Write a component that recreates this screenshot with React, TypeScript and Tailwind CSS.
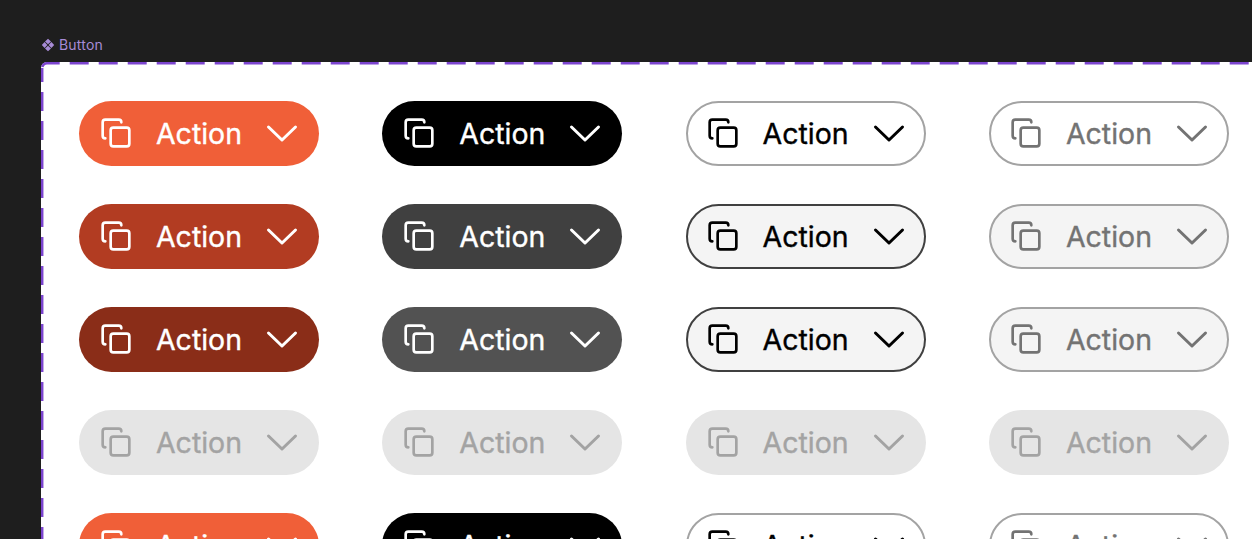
import React from "react"
import { Copy } from "lucide-react"

type Variant = { box: string; ink: string }

const rows: Variant[][] = [
  [
    { box: "bg-[#f05f38]", ink: "text-white" },
    { box: "bg-black", ink: "text-white" },
    { box: "bg-white border-2 border-[#a3a3a3]", ink: "text-black" },
    { box: "bg-white border-2 border-[#a3a3a3]", ink: "text-[#737373]" },
  ],
  [
    { box: "bg-[#b23c22]", ink: "text-white" },
    { box: "bg-[#404040]", ink: "text-white" },
    { box: "bg-[#f4f4f4] border-2 border-[#404040]", ink: "text-black" },
    { box: "bg-[#f4f4f4] border-2 border-[#a3a3a3]", ink: "text-[#737373]" },
  ],
  [
    { box: "bg-[#8a2d18]", ink: "text-white" },
    { box: "bg-[#525252]", ink: "text-white" },
    { box: "bg-[#f4f4f4] border-2 border-[#404040]", ink: "text-black" },
    { box: "bg-[#f4f4f4] border-2 border-[#a3a3a3]", ink: "text-[#737373]" },
  ],
  [
    { box: "bg-[#e5e5e5]", ink: "text-[#a3a3a3]" },
    { box: "bg-[#e5e5e5]", ink: "text-[#a3a3a3]" },
    { box: "bg-[#e5e5e5]", ink: "text-[#a3a3a3]" },
    { box: "bg-[#e5e5e5]", ink: "text-[#a3a3a3]" },
  ],
  [
    { box: "bg-[#f05f38]", ink: "text-white" },
    { box: "bg-black", ink: "text-white" },
    { box: "bg-white border-2 border-[#a3a3a3]", ink: "text-black" },
    { box: "bg-white border-2 border-[#a3a3a3]", ink: "text-[#737373]" },
  ],
]

function ActionButton({ box, ink }: Variant) {
  return (
    <button className={`flex h-[64.5px] w-[240px] items-center justify-center gap-6 rounded-full ${box} ${ink}`}>
      <Copy size={32} strokeWidth={2} />
      <span className="pt-[2px] text-[28.5px] leading-none [-webkit-text-stroke:0.35px]">Action</span>
      <svg width="32" height="32" viewBox="0 0 32 32" fill="none" stroke="currentColor" strokeWidth="3" strokeLinecap="round" strokeLinejoin="round">
        <path d="M2.5 10 L16 23 L29.5 10" />
      </svg>
    </button>
  )
}

export default function App() {
  return (
    <div className="h-[539px] w-[1252px] overflow-hidden bg-[#1e1e1e] pl-[41px] pt-[38px] [font-family:Inter,sans-serif]">
      <div className="flex h-[14px] items-center gap-[4px] text-[14px] leading-none tracking-[0.2px] text-[#a78bd6]">
        <svg width="14" height="14" viewBox="0 0 14 14" fill="currentColor">
          <path d="M7 .8 10 3.6 7 6.3 4 3.6ZM3.6 4 6.4 7 3.6 10 .8 7ZM10.4 4 13.2 7 10.4 10 7.6 7ZM7 7.7 10 10.4 7 13.2 4 10.4Z" />
        </svg>
        Button
      </div>
      <div className="relative mt-[10px] h-[520px] w-[1300px] rounded-tl-[6px] bg-white pl-[38px] pt-[39px]">
        <svg className="absolute left-0 top-0" width="1300" height="520" fill="none" stroke="#7c45cf" strokeWidth="2.5" strokeDasharray="19 10">
          <path d="M1.2 6 A5 5 0 0 1 6 1.2 H1300" strokeDashoffset="-1" />
          <path d="M1.2 6 V520" strokeDashoffset="5" />
        </svg>
        <div className="grid grid-cols-[repeat(4,240px)] gap-x-[63.33px] gap-y-[38.5px]">
          {rows.map((row, i) =>
            row.map((v, j) => <ActionButton key={`${i}-${j}`} {...v} />)
          )}
        </div>
      </div>
    </div>
  )
}
